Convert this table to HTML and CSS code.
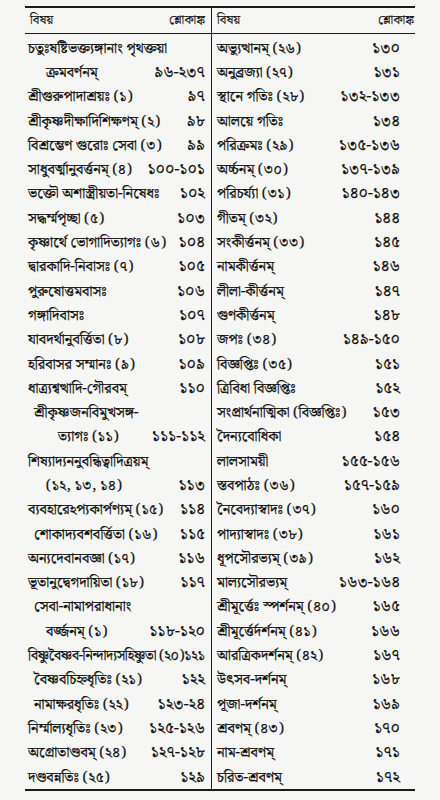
FILE: index.html
```html
<!DOCTYPE html>
<html lang="bn">
<head>
<meta charset="utf-8">
<link rel="stylesheet" href="styles.css">
</head>
<body>
<div class="page">
  <div class="table">
    <div class="col col-left">
      <div class="head"><span>বিষয়</span><span>শ্লোকাঙ্ক</span></div>
      <div class="row"><span class="t">চতুঃষষ্টিভক্ত্যঙ্গানাং পৃথক্তয়া</span><span class="n"></span></div>
      <div class="row"><span class="t ind1">ক্রমবর্ণনম্</span><span class="n">৯৬-২৩৭</span></div>
      <div class="row"><span class="t">শ্রীগুরুপাদাশ্রয়ঃ (১)</span><span class="n">৯৭</span></div>
      <div class="row"><span class="t">শ্রীকৃষ্ণদীক্ষাদিশিক্ষণম্ (২)</span><span class="n">৯৮</span></div>
      <div class="row"><span class="t">বিশ্রম্ভেণ গুরোঃ সেবা (৩)</span><span class="n">৯৯</span></div>
      <div class="row"><span class="t">সাধুবর্ত্মানুবর্ত্তনম্ (৪)</span><span class="n">১০০-১০১</span></div>
      <div class="row"><span class="t">ভক্তৌ অশাস্ত্রীয়তা-নিষেধঃ</span><span class="n">১০২</span></div>
      <div class="row"><span class="t">সদ্ধর্ম্মপৃচ্ছা (৫)</span><span class="n">১০৩</span></div>
      <div class="row"><span class="t">কৃষ্ণার্থে ভোগাদিত্যাগঃ (৬)</span><span class="n">১০৪</span></div>
      <div class="row"><span class="t">দ্বারকাদি-নিবাসঃ (৭)</span><span class="n">১০৫</span></div>
      <div class="row"><span class="t">পুরুষোত্তমবাসঃ</span><span class="n">১০৬</span></div>
      <div class="row"><span class="t">গঙ্গাদিবাসঃ</span><span class="n">১০৭</span></div>
      <div class="row"><span class="t">যাবদর্থানুবর্ত্তিতা (৮)</span><span class="n">১০৮</span></div>
      <div class="row"><span class="t">হরিবাসর সম্মানঃ (৯)</span><span class="n">১০৯</span></div>
      <div class="row"><span class="t">ধাত্র্যশ্বত্থাদি-গৌরবম্</span><span class="n">১১০</span></div>
      <div class="row"><span class="t ind0">শ্রীকৃষ্ণজনবিমুখসঙ্গ-</span><span class="n"></span></div>
      <div class="row"><span class="t ind2">ত্যাগঃ (১১)</span><span class="n">১১১-১১২</span></div>
      <div class="row"><span class="t">শিষ্যাদ্যননুবন্ধিত্বাদিত্রয়ম্</span><span class="n"></span></div>
      <div class="row"><span class="t ind1">(১২, ১৩, ১৪)</span><span class="n">১১৩</span></div>
      <div class="row"><span class="t">ব্যবহারেঽপ্যকার্পণ্যম্ (১৫)</span><span class="n">১১৪</span></div>
      <div class="row"><span class="t ind0">শোকাদ্যবশবর্ত্তিতা (১৬)</span><span class="n">১১৫</span></div>
      <div class="row"><span class="t">অন্যদেবানবজ্ঞা (১৭)</span><span class="n">১১৬</span></div>
      <div class="row"><span class="t">ভূতানুদ্বেগদায়িতা (১৮)</span><span class="n">১১৭</span></div>
      <div class="row"><span class="t ind0">সেবা-নামাপরাধানাং</span><span class="n"></span></div>
      <div class="row"><span class="t ind1">বর্জ্জনম্ (১)</span><span class="n">১১৮-১২০</span></div>
      <div class="row"><span class="t tight">বিষ্ণুবৈষ্ণব-নিন্দাদ্যসহিষ্ণুতা (২০)১২১</span><span class="n"></span></div>
      <div class="row"><span class="t ind0">বৈষ্ণবচিহ্নধৃতিঃ (২১)</span><span class="n">১২২</span></div>
      <div class="row"><span class="t ind0">নামাক্ষরধৃতিঃ (২২)</span><span class="n">১২৩-২৪</span></div>
      <div class="row"><span class="t">নির্ম্মাল্যধৃতিঃ (২৩)</span><span class="n">১২৫-১২৬</span></div>
      <div class="row"><span class="t">অগ্রোতাণ্ডবম্ (২৪)</span><span class="n">১২৭-১২৮</span></div>
      <div class="row"><span class="t">দণ্ডবন্নতিঃ (২৫)</span><span class="n">১২৯</span></div>
    </div>
    <div class="col col-right">
      <div class="head"><span>বিষয়</span><span>শ্লোকাঙ্ক</span></div>
      <div class="row"><span class="t">অভ্যুত্থানম্ (২৬)</span><span class="n">১৩০</span></div>
      <div class="row"><span class="t">অনুব্রজ্যা (২৭)</span><span class="n">১৩১</span></div>
      <div class="row"><span class="t">স্থানে গতিঃ (২৮)</span><span class="n">১৩২-১৩৩</span></div>
      <div class="row"><span class="t">আলয়ে গতিঃ</span><span class="n">১৩৪</span></div>
      <div class="row"><span class="t">পরিক্রমঃ (২৯)</span><span class="n">১৩৫-১৩৬</span></div>
      <div class="row"><span class="t">অর্চ্চনম্ (৩০)</span><span class="n">১৩৭-১৩৯</span></div>
      <div class="row"><span class="t">পরিচর্য্যা (৩১)</span><span class="n">১৪০-১৪৩</span></div>
      <div class="row"><span class="t">গীতম্ (৩২)</span><span class="n">১৪৪</span></div>
      <div class="row"><span class="t">সংকীর্ত্তনম্ (৩৩)</span><span class="n">১৪৫</span></div>
      <div class="row"><span class="t">নামকীর্ত্তনম্</span><span class="n">১৪৬</span></div>
      <div class="row"><span class="t">লীলা-কীর্ত্তনম্</span><span class="n">১৪৭</span></div>
      <div class="row"><span class="t">গুণকীর্ত্তনম্</span><span class="n">১৪৮</span></div>
      <div class="row"><span class="t">জপঃ (৩৪)</span><span class="n">১৪৯-১৫০</span></div>
      <div class="row"><span class="t">বিজ্ঞপ্তিঃ (৩৫)</span><span class="n">১৫১</span></div>
      <div class="row"><span class="t">ত্রিবিধা বিজ্ঞপ্তিঃ</span><span class="n">১৫২</span></div>
      <div class="row"><span class="t">সংপ্রার্থনাত্মিকা (বিজ্ঞপ্তিঃ)</span><span class="n">১৫৩</span></div>
      <div class="row"><span class="t">দৈন্যবোধিকা</span><span class="n">১৫৪</span></div>
      <div class="row"><span class="t">লালসাময়ী</span><span class="n">১৫৫-১৫৬</span></div>
      <div class="row"><span class="t">স্তবপাঠঃ (৩৬)</span><span class="n">১৫৭-১৫৯</span></div>
      <div class="row"><span class="t">নৈবেদ্যাস্বাদঃ (৩৭)</span><span class="n">১৬০</span></div>
      <div class="row"><span class="t">পাদ্যাস্বাদঃ (৩৮)</span><span class="n">১৬১</span></div>
      <div class="row"><span class="t">ধূপসৌরভ্যম্ (৩৯)</span><span class="n">১৬২</span></div>
      <div class="row"><span class="t">মাল্যসৌরভ্যম্</span><span class="n">১৬৩-১৬৪</span></div>
      <div class="row"><span class="t">শ্রীমূর্ত্তেঃ স্পর্শনম্ (৪০)</span><span class="n">১৬৫</span></div>
      <div class="row"><span class="t">শ্রীমূর্ত্তের্দর্শনম্ (৪১)</span><span class="n">১৬৬</span></div>
      <div class="row"><span class="t">আরত্রিকদর্শনম্ (৪২)</span><span class="n">১৬৭</span></div>
      <div class="row"><span class="t">উৎসব-দর্শনম্</span><span class="n">১৬৮</span></div>
      <div class="row"><span class="t">পূজা-দর্শনম্</span><span class="n">১৬৯</span></div>
      <div class="row"><span class="t">শ্রবণম্ (৪৩)</span><span class="n">১৭০</span></div>
      <div class="row"><span class="t">নাম-শ্রবণম্</span><span class="n">১৭১</span></div>
      <div class="row"><span class="t">চরিত-শ্রবণম্</span><span class="n">১৭২</span></div>
    </div>
  </div>
</div>
</body>
</html>
```
FILE: styles.css
```css
html, body {
  margin: 0;
  padding: 0;
  background: #f6f6f4;
}
.page {
  width: 440px;
  height: 800px;
  padding: 6px 0 0 25px;
  box-sizing: border-box;
  font-family: "Noto Serif Bengali", "Noto Sans Bengali", "Lohit Bengali", "Noto Sans", serif;
  color: #111;
}
.table {
  display: flex;
  width: 390px;
  border-top: 2px solid #1a1a1a;
  border-bottom: 2px solid #1a1a1a;
}
.col {
  display: flex;
  flex-direction: column;
}
.col-left {
  width: 187px;
  border-right: 1.5px solid #1a1a1a;
  box-sizing: border-box;
}
.col-right {
  width: 203px;
}
.head {
  height: 26px;
  border-bottom: 1.5px solid #1a1a1a;
  display: flex;
  justify-content: space-between;
  align-items: center;
  font-size: 13px;
  padding: 0 6px 0 5px;
  box-sizing: border-box;
  -webkit-text-stroke: 0.15px #111;
}
.col-right .head {
  padding: 0 1px 0 5px;
}
.head + .row {
  margin-top: 2px;
}
.row {
  height: 24.3px;
  display: flex;
  justify-content: space-between;
  align-items: center;
  font-size: 14.5px;
  padding: 0 6px 0 3px;
  white-space: nowrap;
  -webkit-text-stroke: 0.25px #111;
}
.col-right .row {
  padding: 0 15px 0 5px;
}
.t.ind0 { padding-left: 6px; }
.t.ind1 { padding-left: 18px; }
.t.ind2 { padding-left: 30px; }
.t.tight { letter-spacing: -0.4px; font-size: 14px; }
.n {
  font-size: 15.5px;
  text-align: right;
}
```
